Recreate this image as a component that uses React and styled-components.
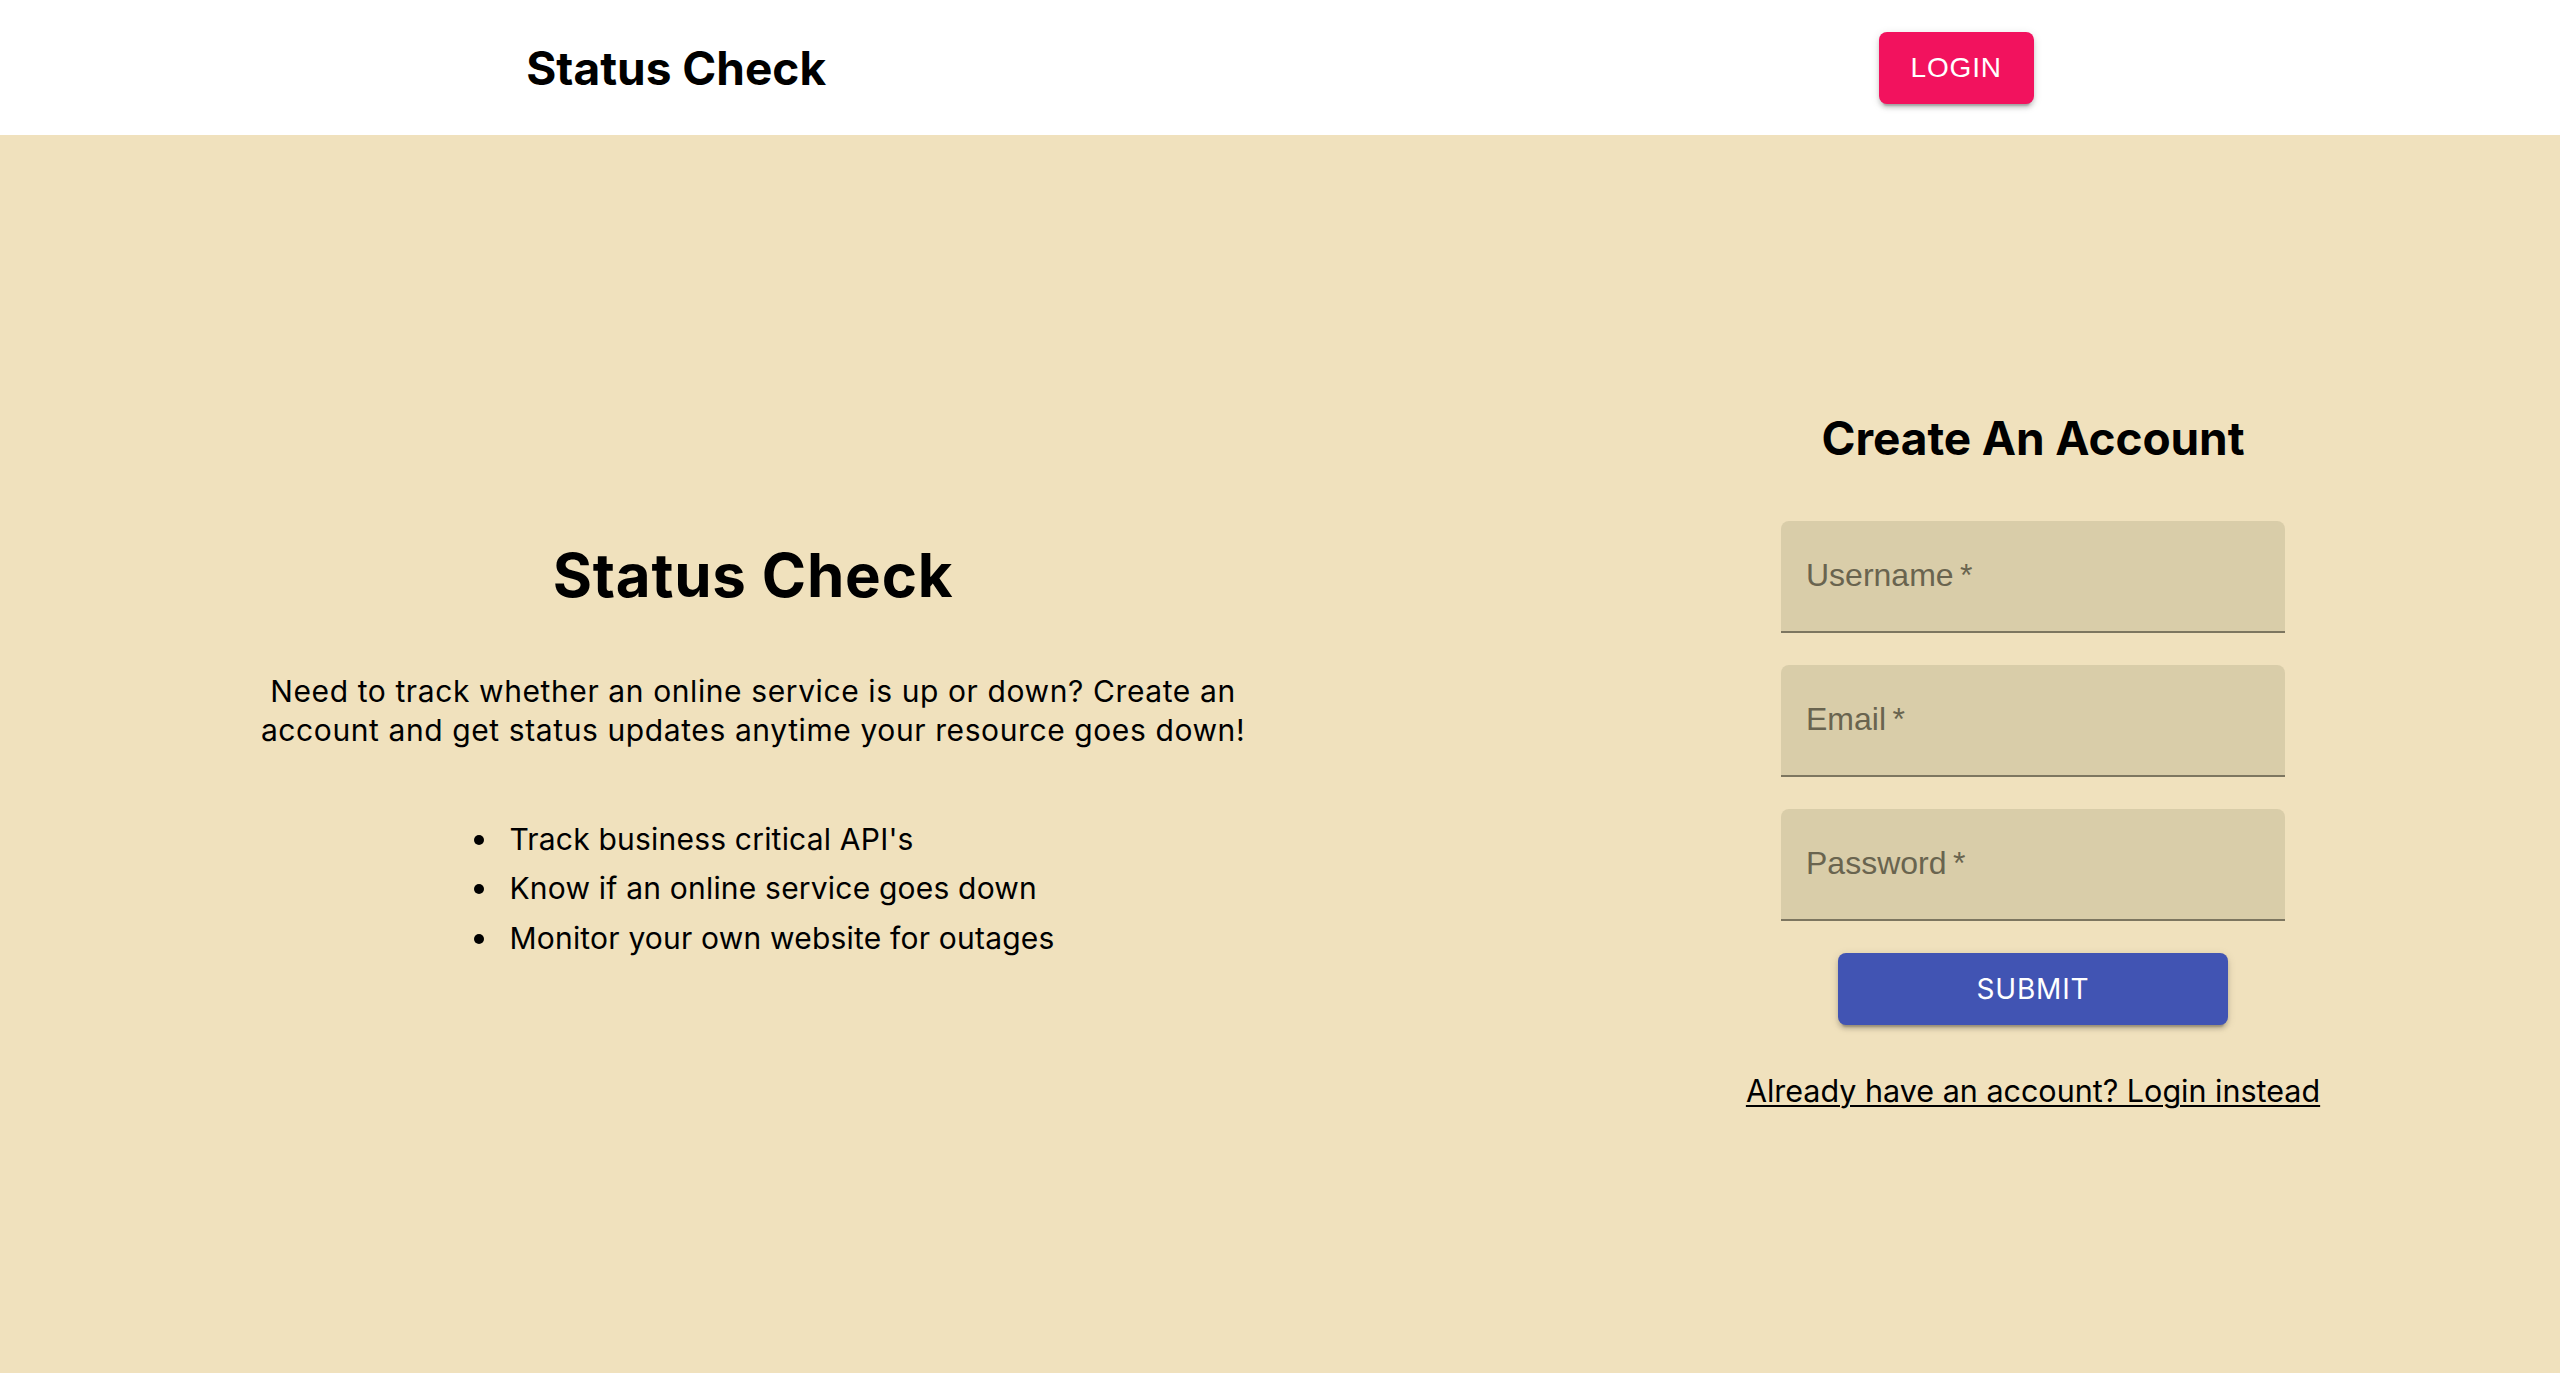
import React from "react";
import styled, { createGlobalStyle } from "styled-components";

const GlobalStyle = createGlobalStyle`
  html, body { margin: 0; padding: 0; background: #ffffff; }
  body { font-family: Inter, "Noto Sans", sans-serif; color: #000; }
  * { box-sizing: border-box; }
`;

const Header = styled.header`
  height: 135px;
  background: #ffffff;
  display: flex;
  align-items: center;
  justify-content: space-around;
`;

const Brand = styled.div`
  font-family: Inter, sans-serif;
  font-weight: 700;
  font-size: 46px;
  line-height: 1;
  letter-spacing: 0;
`;

const Button = styled.button`
  border: none;
  border-radius: 8px;
  color: #fff;
  cursor: pointer;
  font-size: 28px;
  letter-spacing: 0.8px;
  text-transform: uppercase;
  height: 72px;
  box-shadow: 0 6px 2px -4px rgba(0,0,0,0.2), 0 4px 4px 0 rgba(0,0,0,0.14), 0 2px 10px 0 rgba(0,0,0,0.12);
  background: ${(p) => p.$bg};
  width: ${(p) => p.$width || "auto"};
  padding: 0 32px;
  font-family: ${(p) => p.$font || "Inter, sans-serif"};
  font-weight: 400;
`;

const Main = styled.main`
  height: 1238px;
  background: #f0e1bd;
  display: flex;
  align-items: center;
  justify-content: space-around;
`;

const Intro = styled.section`
  width: 1024px;
  padding-bottom: 6px;
  display: flex;
  flex-direction: column;
  align-items: center;
  text-align: center;
`;

const Title = styled.h1`
  margin: 0;
  font-size: 60px;
  font-weight: 700;
  line-height: 72px;
  letter-spacing: 0.8px;
`;

const Lead = styled.p`
  margin: 61px 0 0;
  font-size: 30px;
  line-height: 39px;
  letter-spacing: 0.6px;
  font-weight: 400;
`;

const List = styled.ul`
  list-style: none;
  margin: 65px 0 0 23px;
  padding: 0;
  text-align: left;
`;

const Item = styled.li`
  display: flex;
  align-items: center;
  gap: 25px;
  font-size: 30px;
  line-height: 49.5px;
  letter-spacing: 0.2px;
  &::before {
    content: "";
    width: 10px;
    height: 10px;
    border-radius: 50%;
    background: #000;
    flex: none;
  }
`;

const FormCol = styled.section`
  width: 572px;
  padding-top: 16px;
  display: flex;
  flex-direction: column;
  align-items: center;
`;

const FormTitle = styled.h2`
  margin: 0;
  font-size: 46px;
  font-weight: 700;
  line-height: 55px;
  letter-spacing: -0.1px;
`;

const Fields = styled.div`
  margin-top: 55px;
  display: flex;
  flex-direction: column;
  gap: 32px;
  width: 504px;
`;

const Field = styled.label`
  height: 112px;
  background: #d9cda9;
  border-radius: 8px 8px 0 0;
  border-bottom: 2px solid #7d7660;
  display: flex;
  align-items: center;
  padding: 0 25px;
  font-family: "Liberation Sans", Arial, sans-serif;
  font-size: 32px;
  color: #69644f;
`;

const SubmitWrap = styled.div`
  margin-top: 32px;
`;

const LoginLink = styled.a`
  margin-top: 43px;
  font-size: 30.5px;
  line-height: 46px;
  color: #000;
  text-decoration: underline;
  text-underline-offset: 3px;
  text-decoration-thickness: 2px;
  white-space: nowrap;
`;

export default function App() {
  return (
    <>
      <GlobalStyle />
      <Header>
        <Brand>Status Check</Brand>
        <Button $bg="#f2125e" $font='"Liberation Sans", Arial, sans-serif'>Login</Button>
      </Header>
      <Main>
        <Intro>
          <Title>Status Check</Title>
          <Lead>
            Need to track whether an online service is up or down? Create an account and get status updates anytime your resource goes down!
          </Lead>
          <List>
            <Item>Track business critical API's</Item>
            <Item>Know if an online service goes down</Item>
            <Item>Monitor your own website for outages</Item>
          </List>
        </Intro>
        <FormCol>
          <FormTitle>Create An Account</FormTitle>
          <Fields>
            <Field>Username{"\u2009"}*</Field>
            <Field>Email{"\u2009"}*</Field>
            <Field>Password{"\u2009"}*</Field>
          </Fields>
          <SubmitWrap>
            <Button $bg="#4154b3" $width="390px">Submit</Button>
          </SubmitWrap>
          <LoginLink href="#">Already have an account? Login instead</LoginLink>
        </FormCol>
      </Main>
    </>
  );
}
